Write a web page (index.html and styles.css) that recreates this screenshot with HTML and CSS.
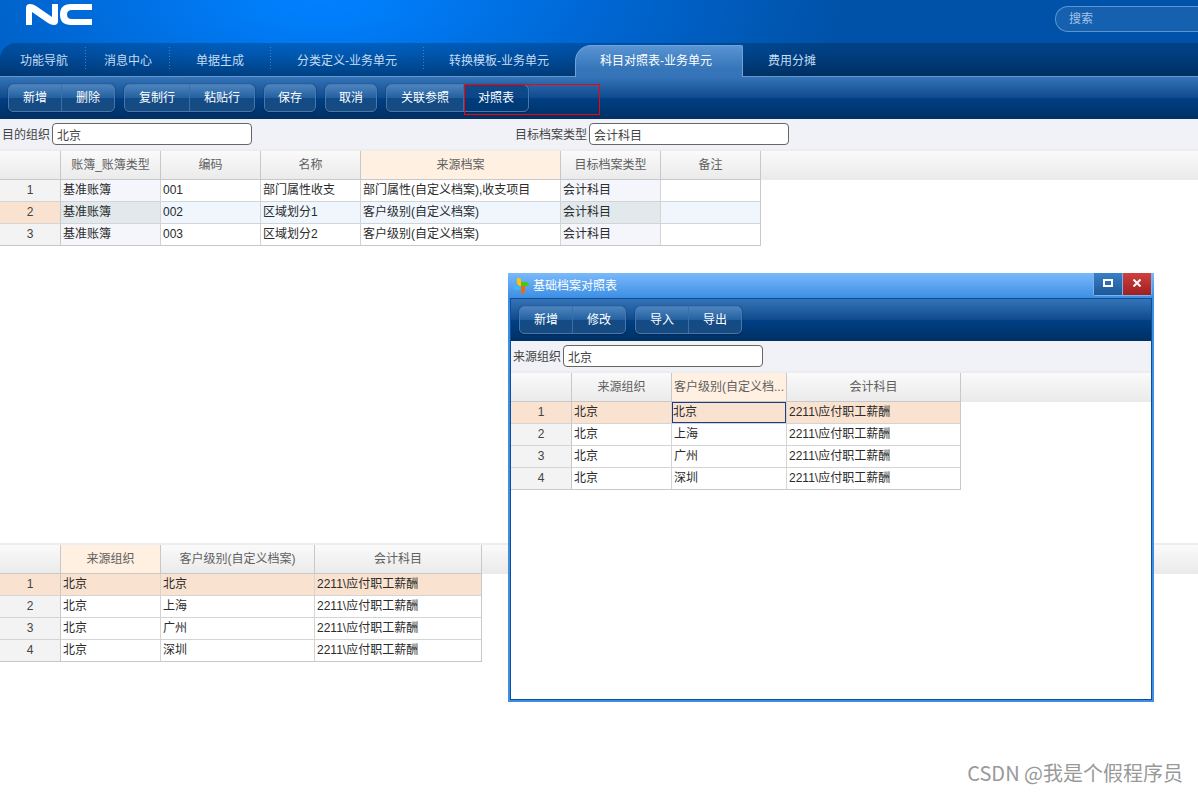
FILE: index.html
```
<!DOCTYPE html>
<html lang="zh-CN">
<head>
<meta charset="utf-8">
<title>科目对照表-业务单元</title>
<link rel="stylesheet" href="styles.css">
</head>
<body>
<div class="app">
  <header class="banner">
    <div class="brand-row">
      <svg class="logo" viewBox="0 0 66 21" role="img" aria-label="NC">
        <path d="M0 21V4Q0 0 4 0Q7 0 10 2L26 13V0H32V17Q32 21 28 21Q25 21 22 19L6 8V21Z"/>
        <path d="M66 0V6H46Q41 6 41 10.500Q41 15 46 15H66V21H45Q34 21 34 10.500Q34 0 45 0Z"/>
      </svg>
      <input class="search" type="text" placeholder="搜索" aria-label="搜索">
    </div>
    <nav class="tabs">
      <button class="tab tab-first">功能导航</button>
      <button class="tab tab-narrow">消息中心</button>
      <button class="tab">单据生成</button>
      <button class="tab">分类定义-业务单元</button>
      <button class="tab tab-last">转换模板-业务单元</button>
      <button class="tab tab-active">科目对照表-业务单元</button>
      <button class="tab tab-last">费用分摊</button>
    </nav>
  </header>

  <div class="toolbar">
    <div class="group"><button>新增</button><button>删除</button></div>
    <div class="group"><button>复制行</button><button>粘贴行</button></div>
    <div class="group group-single"><button>保存</button></div>
    <div class="group group-single"><button>取消</button></div>
    <div class="group"><button>关联参照</button><button class="pressed">对照表</button><span class="highlight"></span></div>
  </div>

  <main class="workspace">
    <section>
      <div class="form">
        <div class="field field-first"><label for="dest">目的组织</label><input id="dest" type="text" value="北京"></div>
        <div class="field"><label for="type">目标档案类型</label><input id="type" type="text" value="会计科目"></div>
      </div>
      <div class="grid-wrap">
        <table class="grid">
          <colgroup><col class="w61"><col class="w100"><col class="w100"><col class="w100"><col class="w200"><col class="w100"><col class="w100"></colgroup>
          <thead><tr><th></th><th>账簿_账簿类型</th><th>编码</th><th>名称</th><th class="sel">来源档案</th><th>目标档案类型</th><th>备注</th></tr></thead>
          <tbody>
            <tr><th>1</th><td class="ro">基准账簿</td><td>001</td><td>部门属性收支</td><td>部门属性(自定义档案),收支项目</td><td class="ro">会计科目</td><td></td></tr>
            <tr class="hover"><th>2</th><td class="ro">基准账簿</td><td>002</td><td>区域划分1</td><td>客户级别(自定义档案)</td><td class="ro">会计科目</td><td></td></tr>
            <tr><th>3</th><td class="ro">基准账簿</td><td>003</td><td>区域划分2</td><td>客户级别(自定义档案)</td><td class="ro">会计科目</td><td></td></tr>
          </tbody>
        </table>
      </div>
    </section>
    <section>
      <div class="grid-wrap">
        <table class="grid">
          <colgroup><col class="w61"><col class="w100"><col class="w154"><col class="w167"></colgroup>
          <thead><tr><th></th><th class="sel">来源组织</th><th>客户级别(自定义档案)</th><th>会计科目</th></tr></thead>
          <tbody>
            <tr class="current"><th>1</th><td>北京</td><td>北京</td><td>2211\应付职工薪酬</td></tr>
            <tr><th>2</th><td>北京</td><td>上海</td><td>2211\应付职工薪酬</td></tr>
            <tr><th>3</th><td>北京</td><td>广州</td><td>2211\应付职工薪酬</td></tr>
            <tr><th>4</th><td>北京</td><td>深圳</td><td>2211\应付职工薪酬</td></tr>
          </tbody>
        </table>
      </div>
    </section>
  </main>
  <p class="credit">CSDN @我是个假程序员</p>
</div>

<div class="dialog" role="dialog" aria-labelledby="dialog-title">
  <div class="titlebar">
    <svg class="app-icon" viewBox="0 0 16 16" aria-hidden="true">
      <path fill="#fdc500" d="M4 0H6Q8 0 8 2V8H7Q4 7 4 4Z"/>
      <path fill="#4fc414" d="M8 4H14Q16 5 16 8H8Z"/>
      <path fill="#3fb4f7" d="M8 8V12H3Q0 11 0 8Z"/>
      <path fill="#f2660c" d="M8 8H12V12Q12 15 8 16Z"/>
    </svg>
    <h2 id="dialog-title">基础档案对照表</h2>
    <div class="window-buttons">
      <button class="maximize" aria-label="最大化"><svg viewBox="0 0 10 8"><path d="M1 1H9V7H1Z"/></svg></button>
      <button class="close" aria-label="关闭"><svg viewBox="0 0 10 8"><path d="M1.500 0.500L8.500 7.500M8.500 0.500L1.500 7.500"/></svg></button>
    </div>
  </div>
  <div class="dialog-body">
    <div class="toolbar toolbar-dialog">
      <div class="group"><button>新增</button><button>修改</button></div>
      <div class="group"><button>导入</button><button>导出</button></div>
    </div>
    <div class="form">
      <div class="field"><label for="src">来源组织</label><input id="src" type="text" value="北京"></div>
    </div>
    <div class="grid-wrap">
      <table class="grid">
        <colgroup><col class="w61"><col class="w100"><col class="w115"><col class="w174"></colgroup>
        <thead><tr><th></th><th>来源组织</th><th class="sel">客户级别(自定义档...</th><th>会计科目</th></tr></thead>
        <tbody>
          <tr class="current"><th>1</th><td>北京</td><td class="focus">北京</td><td>2211\应付职工薪酬</td></tr>
          <tr><th>2</th><td>北京</td><td>上海</td><td>2211\应付职工薪酬</td></tr>
          <tr><th>3</th><td>北京</td><td>广州</td><td>2211\应付职工薪酬</td></tr>
          <tr><th>4</th><td>北京</td><td>深圳</td><td>2211\应付职工薪酬</td></tr>
        </tbody>
      </table>
    </div>
  </div>
</div>
</body>
</html>
```
FILE: styles.css
```
* { box-sizing: border-box; }

body {
  margin: 0;
  background: #fff;
  color: #2b2b2b;
  font: 12px/16px "Liberation Sans", "Noto Sans CJK SC", sans-serif;
}

button, input {
  margin: 0;
  padding: 0;
  border: 0;
  background: none;
  color: inherit;
  font: inherit;
}

.app {
  display: flex;
  flex-direction: column;
  min-height: 100vh;
}

/* Banner */
.banner {
  background: radial-gradient(ellipse 520px 200px at 320px 0, #0080ff 0%, #007cf7 15%, #0066d2 55%, #0052a8 100%);
}

.brand-row {
  display: flex;
  justify-content: space-between;
  align-items: flex-start;
  height: 43px;
  padding: 4px 0 0 26px;
}

.logo {
  width: 66px;
  height: 21px;
  fill: #fff;
}

.search {
  width: 143px;
  height: 26px;
  margin-top: 2px;
  padding-left: 13px;
  border: 1px solid #5b95d0;
  border-right: 0;
  border-radius: 13px 0 0 13px;
  background: #1660b0;
  color: #fff;
}

.search::placeholder { color: #a5c5e8; opacity: 1; }

.tabs {
  display: flex;
  height: 33px;
  border-top-left-radius: 16px;
  background: linear-gradient(rgba(0, 0, 0, .2), rgba(0, 0, 0, .24) 30%, rgba(0, 0, 0, .42));
}

.tab {
  padding: 2px 27px 0 26px;
  background: repeating-linear-gradient(rgba(110, 160, 215, .6) 0 1px, transparent 1px 3px) right 4px / 1px 23px no-repeat;
  color: #c4dcf4;
  white-space: nowrap;
}

.tab-first { padding-left: 20px; padding-right: 18px; }
.tab-narrow { padding-left: 18px; padding-right: 18px; }
.tab-last { padding-left: 25px; padding-right: 26px; background: none; }

.tab-active {
  height: 34px;
  margin: 2px 0 0;
  padding: 0 30px 2px 24px;
  border: 1px solid #6fa3dc;
  border-bottom: 0;
  border-radius: 16px 2px 0 0;
  background: linear-gradient(#5994d4, #3575b8 75%, #3574b9);
  color: #fff;
  z-index: 1;
  height: 32px;
}

/* Toolbars */
.toolbar {
  display: flex;
  align-items: flex-start;
  gap: 9px;
  height: 43px;
  padding: 7px 8px 0;
  border-top: 1px solid #6596cc;
  background: linear-gradient(#3574b9, #0f4a8c 50%, #004085 50%, #003064);
}

.toolbar-dialog {
  height: 42px;
  padding-top: 7px;
  border-top: 0;
}

.group {
  position: relative;
  display: flex;
  height: 28px;
  border: 1px solid #4678ad;
  border-radius: 5px;
  background: linear-gradient(#4d84bf, #23609f 50%, #134b86 50%, #184b80);
  box-shadow: 0 1px 1px #00285c, 0 0 1px #00285c;
  color: #fff;
}

.group button { padding: 0 14px; white-space: nowrap; }
.group button + button { border-left: 1px solid #3a6ea6; }
.group-single button { padding: 0 13px; }

.group .pressed {
  border-radius: 0 5px 5px 0;
  background: linear-gradient(#124a88, #0b4689 50%, #003b7c 50%, #003a76);
}

/* Red call-out drawn over the pressed button */
.highlight {
  position: absolute;
  top: -1px;
  right: -72px;
  width: 136px;
  height: 31px;
  border: 1px solid #f00;
}

/* Forms */
.form {
  display: flex;
  align-items: center;
  height: 30px;
  padding-left: 2px;
  background: #f1f2f7;
}

.field {
  display: flex;
  align-items: center;
  gap: 2px;
  color: #444;
}

.field label { padding-top: 2px; }
.field-first { width: 513px; }

.field input {
  width: 200px;
  height: 22px;
  padding: 0 4px;
  border: 1px solid #666;
  border-radius: 4px;
  background: #fff;
}

/* Data grids */
.workspace {
  flex: 1;
  display: grid;
  grid-template-rows: 424fr 250fr;
}

.grid-wrap {
  border-top: 2px solid #ededed;
  background: linear-gradient(#fafafa, #eaeaea) 0 0 / 100% 29px no-repeat;
}

.grid {
  table-layout: fixed;
  width: 0;
  border-collapse: separate;
  border-spacing: 0;
  border-bottom: 1px solid #c8c8c8;
}

.w61 { width: 61px; }
.w100 { width: 100px; }
.w115 { width: 115px; }
.w154 { width: 154px; }
.w167 { width: 167px; }
.w174 { width: 174px; }
.w200 { width: 200px; }

.grid th, .grid td {
  height: 22px;
  padding: 0 2px 2px;
  border-right: 1px solid #d4d4d4;
  border-bottom: 1px solid #d4d4d4;
  overflow: hidden;
  white-space: nowrap;
}

.grid th { color: #444; font-weight: normal; text-align: center; }
.grid td { background: #fff; }

.grid thead th {
  height: 29px;
  padding-bottom: 0;
  border-color: #c8c8c8;
  color: #606060;
}

.grid thead th.sel { background: #fff0e2; }
.grid tbody th { background: #f3f3f3; border-right-color: #c8c8c8; }
.grid th:last-child, .grid td:last-child { border-right-color: #c8c8c8; }
.grid tbody tr:last-child > * { height: 21px; border-bottom: 0; }
.grid td.ro { background: #f5f6fb; }
.grid .hover td { background: #eff6fe; }
.grid .hover td.ro { background: #e1e9ec; }
.grid .hover th, .grid .current th, .grid .current td { background: #fae2d0; }
.grid td.focus { padding-left: 1px; box-shadow: inset 0 0 0 1px #1c3d80; }

/* Floating window */
.dialog {
  position: absolute;
  left: 508px;
  top: 273px;
  display: flex;
  flex-direction: column;
  width: 646px;
  height: 429px;
  padding: 0 2px 2px;
  background: linear-gradient(#7ab9fb, #3c8ee4 25px);
}

.titlebar {
  display: flex;
  align-items: center;
  gap: 4px;
  height: 25px;
  padding-left: 3px;
}

.app-icon { width: 16px; height: 16px; }

.titlebar h2 {
  flex: 1;
  margin: 0;
  color: #fff;
  font-size: 12px;
  font-weight: normal;
}

.window-buttons {
  display: flex;
  align-self: flex-start;
  gap: 1px;
  padding: 0 1px 1px;
  border-radius: 0 0 3px 3px;
  background: #78b4f2;
}

.window-buttons button {
  display: flex;
  align-items: center;
  justify-content: center;
  width: 28px;
  height: 22px;
  padding-bottom: 2px;
}

.window-buttons svg {
  width: 10px;
  height: 8px;
  fill: none;
  stroke: #fff;
  stroke-width: 2;
}

.maximize { background: linear-gradient(#3a80c8, #1d5796); }
.close { background: linear-gradient(#d04040, #9e1f20); }

.dialog-body {
  flex: 1;
  border: 1px solid #104e94;
  background: #fff;
}

.credit {
  position: absolute;
  right: 15px;
  bottom: 7px;
  margin: 0;
  color: #999;
  font: 20px/26px "Noto Sans CJK SC", sans-serif;
}
```
